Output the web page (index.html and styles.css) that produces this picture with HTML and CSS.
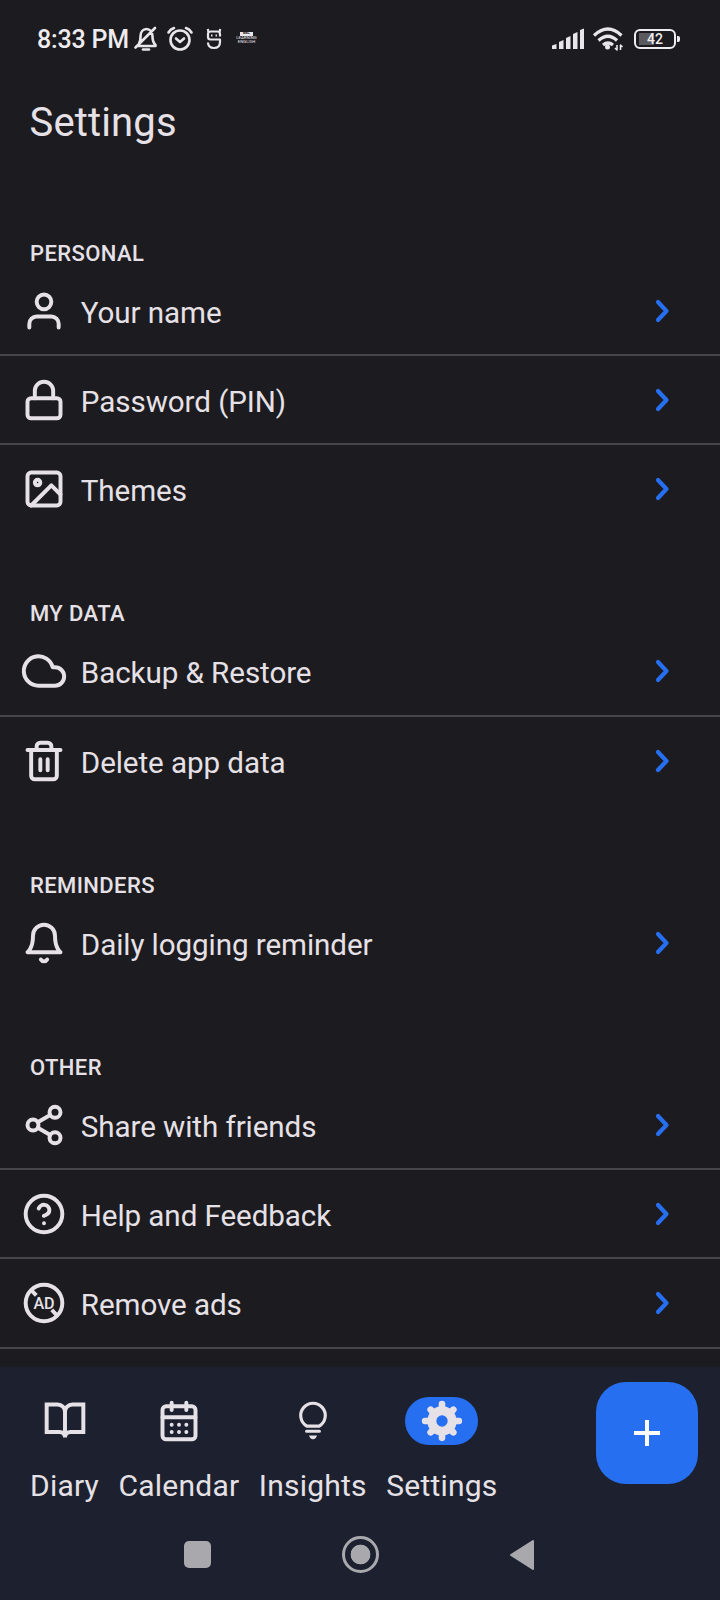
FILE: index.html
```html
<!DOCTYPE html>
<html lang="en">
<head>
<meta charset="utf-8">
<title>Settings</title>
<link rel="stylesheet" href="styles.css">
</head>
<body>
<div class="screen">
  <header class="status">
    <span class="time">8:33 PM</span>
    <svg class="st-bell" viewBox="0 0 24 26"><path d="M5 17.500c1.500-2 1.500-4 1.500-7C6.500 6 9 3 12.500 3S18.500 6 18.500 10.500c0 3 .5 6 3 8.500v1H4M1.500 21.500 21 2"/><path d="M9 23.500h6"/></svg>
    <svg class="st-alarm" viewBox="0 0 26 26"><circle cx="13" cy="14" r="9.500"/><path d="m9 12.500 4 3.500 4-3.500M1.500 6.500Q3.500 3 7 2M24.500 6.500Q22.500 3 19 2"/></svg>
    <svg class="st-s" viewBox="0 0 16 22"><path d="M14 8.500V6q0-2.500-3-2.500H5Q2 3.500 2 6v3q0 2.500 2.500 2.500H14V14q0 6-6 6t-6-5.500M2.500 4.500 1.800 1M13.500 4.500l.7-3.500M5 7.500h1.500M9.500 7.500H11"/></svg>
    <span class="learn"><b>BBC</b><span>LEARNING</span><span>ENGLISH</span></span>
    <span class="spacer"></span>
    <svg class="st-signal" viewBox="0 0 32 22"><path d="M0 17.500 4.500 16v5H0zM7 14l4.500-2v9H7zM14 10l4.500-2v13H14zM21 6l4.500-2v17H21zM28 2l4-1.500V21h-4z"/></svg>
    <svg class="st-wifi" viewBox="0 0 32 24"><path d="M2 8.500Q16-4.500 29.500 8.500M6.500 13.500q9.500-8.500 18.500 0M11 18q5-4 10 0"/><circle cx="15.500" cy="20" r="2.500"/><path class="arrows" d="M25 18v5l-2-2M28.500 23v-5l2 2"/></svg>
    <span class="battery"><span>42</span></span>
  </header>
  <h1>Settings</h1>
  <main>
    <section>
      <h2>PERSONAL</h2>
      <div class="row"><svg class="ico" viewBox="0 0 24 24"><path d="M20 21v-2a4 4 0 0 0-4-4H8a4 4 0 0 0-4 4v2"/><circle cx="12" cy="7" r="4"/></svg><span>Your name</span><svg class="chev" viewBox="0 0 14 24"><path d="m3 3 8.500 9L3 21"/></svg></div>
      <div class="row"><svg class="ico" viewBox="0 0 24 24"><rect x="3" y="11" width="18" height="11" rx="2"/><path d="M7 11V7a5 5 0 0 1 10 0v4"/></svg><span>Password (PIN)</span><svg class="chev" viewBox="0 0 14 24"><path d="m3 3 8.500 9L3 21"/></svg></div>
      <div class="row last"><svg class="ico" viewBox="0 0 24 24"><rect x="3" y="3" width="18" height="18" rx="2"/><circle cx="8.500" cy="8.500" r="1.500"/><path d="m21 15-5-5L5 21"/></svg><span>Themes</span><svg class="chev" viewBox="0 0 14 24"><path d="m3 3 8.500 9L3 21"/></svg></div>
    </section>
    <section>
      <h2>MY DATA</h2>
      <div class="row"><svg class="ico" viewBox="0 0 24 24"><path d="M18 10h-1.260A8 8 0 1 0 9 20h9a5 5 0 0 0 0-10z"/></svg><span>Backup &amp; Restore</span><svg class="chev" viewBox="0 0 14 24"><path d="m3 3 8.500 9L3 21"/></svg></div>
      <div class="row last"><svg class="ico" viewBox="0 0 24 24"><path d="M3 6h18M19 6v14a2 2 0 0 1-2 2H7a2 2 0 0 1-2-2V6M8 6V4a2 2 0 0 1 2-2h4a2 2 0 0 1 2 2v2M10 11v6M14 11v6"/></svg><span>Delete app data</span><svg class="chev" viewBox="0 0 14 24"><path d="m3 3 8.500 9L3 21"/></svg></div>
    </section>
    <section>
      <h2>REMINDERS</h2>
      <div class="row last"><svg class="ico" viewBox="0 0 24 24"><path d="M18 8A6 6 0 0 0 6 8c0 7-3 9-3 9h18s-3-2-3-9M13.730 21a2 2 0 0 1-3.460 0"/></svg><span>Daily logging reminder</span><svg class="chev" viewBox="0 0 14 24"><path d="m3 3 8.500 9L3 21"/></svg></div>
    </section>
    <section>
      <h2>OTHER</h2>
      <div class="row"><svg class="ico" viewBox="0 0 24 24"><circle cx="18" cy="5" r="3"/><circle cx="6" cy="12" r="3"/><circle cx="18" cy="19" r="3"/><path d="m8.590 13.510 6.830 3.980M15.410 6.510l-6.820 3.980"/></svg><span>Share with friends</span><svg class="chev" viewBox="0 0 14 24"><path d="m3 3 8.500 9L3 21"/></svg></div>
      <div class="row"><svg class="ico" viewBox="0 0 24 24"><circle cx="12" cy="12" r="10"/><path d="M9.090 9a3 3 0 0 1 5.830 1c0 2-3 3-3 3M12 17h.01"/></svg><span>Help and Feedback</span><svg class="chev" viewBox="0 0 14 24"><path d="m3 3 8.500 9L3 21"/></svg></div>
      <div class="row"><svg class="ico" viewBox="0 0 24 24"><circle cx="12" cy="12" r="10"/><path class="butt" d="m5 5 2.800 2.800M16.200 15.800 19 18.600"/><text x="12" y="15.200">AD</text></svg><span>Remove ads</span><svg class="chev" viewBox="0 0 14 24"><path d="m3 3 8.500 9L3 21"/></svg></div>
    </section>
  </main>
  <footer>
    <nav class="tabs">
      <div class="tab"><i><svg class="ico" viewBox="0 0 24 24"><path class="miter" d="M2 3h6a4 4 0 0 1 4 4v14a3 3 0 0 0-3-3H2zM22 3h-6a4 4 0 0 0-4 4v14a3 3 0 0 1 3-3h7z"/></svg></i><span>Diary</span></div>
      <div class="tab"><i><svg class="ico" viewBox="0 0 24 24"><rect x="3" y="4" width="18" height="18" rx="2"/><path d="M3 10h18M8 2v4M16 2v4M8 14h.01M12 14h.01M16 14h.01M8 18h.01M12 18h.01M16 18h.01"/></svg></i><span>Calendar</span></div>
      <div class="tab"><i><svg class="ico bulb" viewBox="0 0 24 24"><path d="M8.600 14.800a6.700 6.700 0 1 1 6.800 0zM8.500 17.600h7"/><path class="solid" d="M9.800 19.900h4.400q-.6 2-2.200 2t-2.200-2z"/></svg></i><span>Insights</span></div>
      <div class="tab"><i class="active"><svg class="ico gear" viewBox="0 0 24 24"><g class="teeth"><path d="M12 2.800v18.400M2.800 12h18.400M5.800 5.800l12.400 12.400M18.200 5.800 5.800 18.200"/></g><circle cx="12" cy="12" r="8"/><circle class="hole" cx="12" cy="12" r="3.100"/></svg></i><span>Settings</span></div>
      <button class="fab" aria-label="Add"><svg viewBox="0 0 28 28"><path d="M14 1v26M1 14h26"/></svg></button>
    </nav>
    <div class="sysnav">
      <span class="recent"></span>
      <span class="home"></span>
      <svg class="back" viewBox="0 0 26 32"><path d="M2 16 24 2v28z"/></svg>
    </div>
  </footer>
</div>
</body>
</html>
```

FILE: styles.css
```css
* { box-sizing: border-box; }
body { margin: 0; background: #1c1b20; color: #e6e1e6; font-family: Roboto, sans-serif; }
svg { display: block; flex: none; fill: none; overflow: visible; }
.screen { width: 720px; height: 1600px; display: flex; flex-direction: column; overflow: hidden; }

.status { display: flex; align-items: center; height: 77px; padding: 0 41px 0 37px; color: #eeecee; flex: none; }
.status svg { stroke: #e8e6e8; stroke-width: 2.6; stroke-linecap: round; stroke-linejoin: round; }
.time { font-size: 25px; font-weight: 500; letter-spacing: -0.200px; width: 96px; padding-top: 1px; white-space: nowrap; }
.status .st-bell { width: 24px; height: 26px; margin-left: 1px; }
.status .st-alarm { width: 26px; height: 26px; margin-left: 8.500px; }
.status .st-s { width: 16px; height: 22px; margin-left: 13px; stroke-width: 2.200; stroke-linecap: butt; }
.learn { display: flex; flex-direction: column; align-items: center; width: 22px; margin-left: 14px; font-size: 4.300px; line-height: 4.500px; }
.learn b { background: #e8e6e8; color: #1c1b20; font-size: 3.500px; line-height: 3.500px; padding: 0 3px; }
.spacer { flex: 1; }
.status .st-signal { width: 32px; height: 22px; fill: #e8e6e8; stroke: none; }
.status .st-wifi { width: 32px; height: 24px; margin: 0 10px 0 8px; stroke-width: 3.200; stroke-linecap: butt; }
.st-wifi circle { fill: #e8e6e8; stroke: none; }
.status .arrows { stroke-width: 1.600; }
.battery { position: relative; width: 42px; height: 20px; border: 2px solid #eeecee; border-radius: 6px; margin-right: 3px; display: grid; place-items: center; font-size: 14px; line-height: 16px; font-weight: 500; background: linear-gradient(90deg, #5b5a5e 15px, transparent 15px) 3px 2px / 30px 12px no-repeat; }
.battery::after { content: ""; position: absolute; right: -6px; top: 5px; width: 3px; height: 6px; background: #eeecee; border-radius: 0 2px 2px 0; }

h1 { margin: 0; padding: 20px 29.500px 0; height: 149px; font-size: 40px; line-height: 52px; letter-spacing: 0.150px; font-weight: 400; flex: none; }
main { flex: 1; min-height: 0; overflow: hidden; }
section { padding-bottom: 52px; }
h2 { margin: 0; padding: 13.600px 30px 0; height: 40.670px; font-size: 22px; line-height: 28px; letter-spacing: 0.400px; font-weight: 500; }
.row { display: flex; align-items: center; height: 89.333px; padding: 1px 51.500px 0 22px; border-bottom: 2px solid #464549; font-size: 29.600px; letter-spacing: -0.080px; }
.row.last { border-color: transparent; }
.row > span { flex: 1; padding: 4px 0 0 14.800px; white-space: nowrap; }
.ico { width: 44px; height: 44px; stroke: #e6e1e6; stroke-width: 2.150; stroke-linecap: round; stroke-linejoin: round; }
.ico text { font-size: 8.800px; font-weight: 500; text-anchor: middle; letter-spacing: 0; fill: #e6e1e6; stroke: none; }
.miter { stroke-linejoin: miter; }
.butt { stroke-linecap: butt; }
.chev { width: 14px; height: 24px; stroke: #276ff1; stroke-width: 4.200; stroke-linecap: round; stroke-linejoin: round; }

footer { height: 233px; background: #1d212f; flex: none; }
.tabs { display: flex; height: 140px; padding: 15px 22px 0 30px; gap: 19.500px; }
.tab { display: flex; flex-direction: column; align-items: center; padding-top: 15px; font-size: 30px; line-height: 36px; letter-spacing: 0.220px; }
.tab i { display: grid; place-items: center; width: 64px; height: 48px; margin-bottom: 23px; }
.tab i.active { width: 73px; border-radius: 24px; background: #276ff1; }
.bulb { stroke-width: 1.700; }
.bulb .solid { fill: #e6e1e6; stroke-width: 0; }
.gear .teeth { stroke-width: 3.600; }
.gear circle { fill: #e6e1e6; stroke: none; }
.gear .hole { fill: #276ff1; }
.fab { margin-left: auto; width: 102px; height: 102px; border: 0; padding: 0; border-radius: 30px; background: #276ff1; display: grid; place-items: center; }
.fab svg { width: 28px; height: 28px; stroke: #fff; stroke-width: 4; }
.sysnav { display: flex; align-items: center; height: 95px; padding: 0 185px 0 184px; justify-content: space-between; }
.recent { width: 27px; height: 27px; border-radius: 5px; background: #a8a8ad; }
.home { width: 37px; height: 37px; border-radius: 50%; border: 3px solid #a8a8ad; background: radial-gradient(circle, #a8a8ad 9.500px, transparent 10.200px); }
.back { width: 26px; height: 32px; fill: #a8a8ad; stroke: #a8a8ad; stroke-width: 2; stroke-linejoin: round; }
```
